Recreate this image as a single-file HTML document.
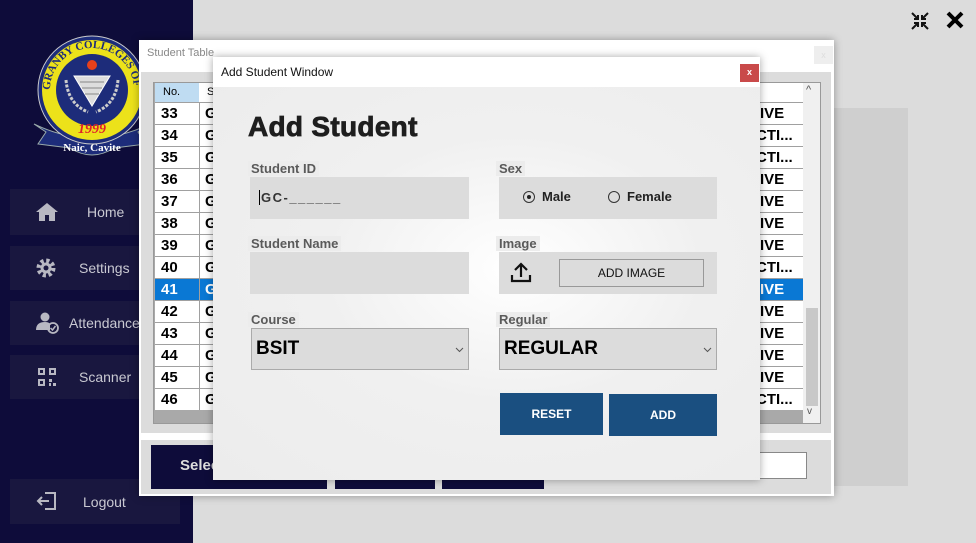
<!DOCTYPE html>
<html><head><meta charset="utf-8"><style>
*{box-sizing:border-box;margin:0;padding:0}
body{width:976px;height:543px;overflow:hidden;background:#dcdcdc;font-family:"Liberation Sans",sans-serif;position:relative}
.abs{position:absolute}
.side{left:0;top:0;width:193px;height:543px;background:#0e0c3a}
.nav{left:10px;width:170px;background:#19173f;color:#c9c9d2;font-size:14px}
.nav span{position:absolute;top:50%;transform:translateY(-50%)}
.win{background:#fff;box-shadow:0 0 8px rgba(0,0,0,.35)}
.cell{position:absolute;font-weight:bold;font-size:15px;color:#000}
.lbl{font-weight:bold;font-size:13px;color:#5a5a5a;background:#ececec;padding:0 3px}
.fld{background:#dcdcdc}
.btn{background:#1a4f80;color:#fff;font-weight:bold;font-size:12px;display:flex;align-items:center;justify-content:center}
</style></head><body>
<div class="abs side"></div>
<!-- logo -->
<svg class="abs" style="left:30px;top:32px" width="120" height="130" viewBox="0 0 120 130">
<defs><path id="ring" d="M20 58 A42 42 0 1 1 104 58"/></defs>
<path d="M4 92 L16 100 L8 112 L40 116 Q62 130 84 116 L116 112 L108 100 L120 92 Q62 120 4 92Z" fill="#1d2c7a" stroke="#9aa" stroke-width="1"/>
<text x="62" y="119" text-anchor="middle" font-family="Liberation Serif" font-weight="bold" font-size="11" fill="#fff">Naic, Cavite</text>
<circle cx="62" cy="58" r="54" fill="#1d2c7a" stroke="#ccc" stroke-width="1"/>
<circle cx="62" cy="58" r="50" fill="#ece21a"/>
<text font-family="Liberation Serif" font-weight="bold" font-size="11" fill="#1d2c7a"><textPath href="#ring">GRANBY COLLEGES OF SCIENCE AND TECHNOLOGY</textPath></text>
<circle cx="62" cy="58" r="36" fill="#1d2c7a"/>
<path d="M44 44 L80 44 L62 74Z" fill="#ddd" stroke="#fff"/>
<path d="M50 50 L74 50 M52 56 L72 56 M55 62 L69 62" stroke="#888" stroke-width="1"/>
<circle cx="62" cy="33" r="5" fill="#e8401a"/>
<path d="M36 48 Q38 72 58 80 M88 48 Q86 72 66 80" stroke="#ccc" stroke-width="3" fill="none" stroke-dasharray="3 1.5"/>
<text x="62" y="101" text-anchor="middle" font-family="Liberation Serif" font-weight="bold" font-style="italic" font-size="14" fill="#e0202a">1999</text>
</svg>
<div class="abs nav" style="top:189px;height:46px"><svg class="abs" style="left:26px;top:14px" width="22" height="18" viewBox="0 0 22 18"><path d="M11 0 L22 9 H19 V18 H13 V12 H9 V18 H3 V9 H0Z" fill="#b8b8c2"/></svg><span style="left:77px">Home</span></div>
<div class="abs nav" style="top:246px;height:44px"><svg class="abs" style="left:26px;top:12px" width="20" height="20" viewBox="0 0 20 20"><circle cx="10" cy="10" r="7" fill="none" stroke="#b8b8c2" stroke-width="5" stroke-dasharray="3 2.5"/><circle cx="10" cy="10" r="5.5" fill="#b8b8c2"/><circle cx="10" cy="10" r="2.5" fill="#19173f"/></svg><span style="left:69px">Settings</span></div>
<div class="abs nav" style="top:301px;height:44px"><svg class="abs" style="left:26px;top:11px" width="24" height="22" viewBox="0 0 24 22"><circle cx="9" cy="5" r="4.5" fill="#b8b8c2"/><path d="M0 18 Q0 10 9 10 Q13 10 14 12 L14 18Z" fill="#b8b8c2"/><circle cx="17" cy="16" r="5" fill="none" stroke="#b8b8c2" stroke-width="1.8"/><path d="M14.5 16 L16.5 18 L19.5 14" stroke="#b8b8c2" stroke-width="1.5" fill="none"/></svg><span style="left:59px">Attendance</span></div>
<div class="abs nav" style="top:355px;height:44px"><svg class="abs" style="left:28px;top:13px" width="18" height="18" viewBox="0 0 18 18"><g fill="#b8b8c2"><rect x="0" y="0" width="7" height="7"/><rect x="11" y="0" width="7" height="7"/><rect x="0" y="11" width="7" height="7"/><rect x="11" y="11" width="3" height="3"/><rect x="15" y="15" width="3" height="3"/><rect x="11" y="15" width="2" height="3"/></g><g fill="#19173f"><rect x="2" y="2" width="3" height="3"/><rect x="13" y="2" width="3" height="3"/><rect x="2" y="13" width="3" height="3"/></g></svg><span style="left:69px">Scanner</span></div>
<div class="abs nav" style="top:479px;height:45px"><svg class="abs" style="left:26px;top:12px" width="22" height="20" viewBox="0 0 22 20"><path d="M9 2 H19 V18 H9" stroke="#b8b8c2" stroke-width="2" fill="none"/><path d="M13 10 H2 M6 6 L2 10 L6 14" stroke="#b8b8c2" stroke-width="2" fill="none"/></svg><span style="left:73px">Logout</span></div>

<!-- top right -->
<svg class="abs" style="left:911px;top:12px" width="18" height="18" viewBox="0 0 18 18"><g stroke="#111" stroke-width="2" fill="none"><path d="M1 1 L7 7 M3 7 H7 V3 M17 1 L11 7 M15 7 H11 V3 M1 17 L7 11 M3 11 H7 V15 M17 17 L11 11 M15 11 H11 V15"/></g></svg>
<svg class="abs" style="left:946px;top:11px" width="18" height="18" viewBox="0 0 18 18"><path d="M2 2 L16 16 M16 2 L2 16" stroke="#000" stroke-width="4"/></svg>
<div class="abs" style="left:833px;top:108px;width:75px;height:378px;background:#cfcfcf"></div>

<!-- student table window -->
<div class="abs win" style="left:139px;top:40px;width:695px;height:456px">
 <div class="abs" style="left:8px;top:7px;font-size:11px;color:#888">Student Table</div>
 <div class="abs" style="left:675px;top:6px;width:19px;height:18px;background:#eee;color:#ddd;font-size:9px;text-align:center;line-height:18px">x</div>
 <div class="abs" style="left:2px;top:32px;width:690px;height:361px;background:#dcdcdc"></div>
 <div class="abs" style="left:14px;top:42px;width:668px;height:342px;background:#a9a9a9;border:1px solid #999"></div>
 <div class="abs" style="left:2px;top:400px;width:690px;height:54px;background:#dcdcdc"></div>
 <div class="abs" style="left:12px;top:405px;width:176px;height:44px;background:#0e0c3a;color:#ddd;font-weight:bold;font-size:15px;padding:12px 0 0 29px">Select</div>
 <div class="abs" style="left:196px;top:412px;width:100px;height:37px;background:#0e0c3a"></div>
 <div class="abs" style="left:303px;top:412px;width:102px;height:37px;background:#0e0c3a"></div>
 <div class="abs" style="left:561px;top:412px;width:107px;height:27px;background:#fff;border:1px solid #888"></div>
</div>
<!-- grid -->
<div class="abs" style="left:155px;top:83px;width:648px;height:327px;background:#fff"></div>
<div class="abs" style="left:155px;top:83px;width:44px;height:19px;background:#bfdcf2;font-size:11px;padding:3px 0 0 8px">No.</div>
<div class="abs" style="left:201px;top:83px;font-size:11px;padding:3px 0 0 6px">S</div>
<div class="abs" style="left:803px;top:83px;width:17px;height:340px;background:#f0f0f0"></div>
<div class="abs" style="left:806px;top:308px;width:12px;height:98px;background:#c8c8c8"></div>
<div class="abs" style="left:806px;top:84px;font-size:11px;color:#555">^</div>
<div class="abs" style="left:807px;top:406px;font-size:10px;color:#555">v</div>
<div id="rows"></div>
<script>
var st=["IVE","CTI...","CTI...","IVE","IVE","IVE","IVE","CTI...","IVE","IVE","IVE","IVE","IVE","CTI..."];
var h="";for(var i=0;i<14;i++){var y=102+i*22,sel=i==8,c=sel?"#fff":"#000",bg=sel?"#0a78d4":"#fff";
h+='<div class="abs" style="left:155px;top:'+y+'px;width:648px;height:22px;background:'+bg+';border-top:1px solid #a0a0a0"></div>';
h+='<div class="abs" style="left:199px;top:'+y+'px;width:1px;height:22px;background:#a0a0a0"></div>';
h+='<div class="cell" style="left:161px;top:'+(y+3)+'px;color:'+c+'">'+(33+i)+'</div>';
h+='<div class="cell" style="left:205px;top:'+(y+3)+'px;color:'+c+'">G</div>';
var t=st[i]=="IVE"?"IVE":"CTI...";var x=st[i]=="IVE"?760:756;
h+='<div class="cell" style="left:'+x+'px;top:'+(y+3)+'px;color:'+c+'">'+t+'</div>';}
document.getElementById("rows").innerHTML=h;
</script>

<!-- add student window -->
<div class="abs win" style="left:213px;top:57px;width:547px;height:423px;background:radial-gradient(ellipse at 55% 50%,#ffffff 0%,#f0f0f0 45%,#ececec 100%)">
 <div class="abs" style="left:0;top:0;width:547px;height:30px;background:#fff"></div>
 <div class="abs" style="left:8px;top:8px;font-size:12px;color:#111">Add Student Window</div>
 <div class="abs" style="left:527px;top:7px;width:19px;height:18px;background:#c94a4a;color:#fff;font-size:9px;font-weight:bold;text-align:center;line-height:17px">x</div>
 <div class="abs" style="left:35px;top:54px;font-size:28px;font-weight:bold;color:#1e1e1e;letter-spacing:0.3px;-webkit-text-stroke:0.8px #1e1e1e">Add Student</div>

 <div class="abs lbl" style="left:35px;top:104px">Student ID</div>
 <div class="abs fld" style="left:37px;top:120px;width:219px;height:42px"><div class="abs" style="left:9px;top:13px;font-weight:bold;font-size:13px;color:#333;letter-spacing:1.5px;border-left:1px solid #000;padding-left:1px">GC-______</div></div>
 <div class="abs lbl" style="left:283px;top:104px">Sex</div>
 <div class="abs fld" style="left:286px;top:120px;width:218px;height:42px;font-weight:bold;font-size:13px;color:#222">
  <div class="abs" style="left:24px;top:14px;width:12px;height:12px;border:1px solid #333;border-radius:50%"><div style="width:4px;height:4px;background:#222;border-radius:50%;margin:3px"></div></div>
  <div class="abs" style="left:43px;top:12px">Male</div>
  <div class="abs" style="left:109px;top:14px;width:12px;height:12px;border:1px solid #333;border-radius:50%"></div>
  <div class="abs" style="left:128px;top:12px">Female</div>
 </div>
 <div class="abs lbl" style="left:35px;top:179px">Student Name</div>
 <div class="abs fld" style="left:37px;top:195px;width:219px;height:42px"></div>
 <div class="abs lbl" style="left:283px;top:179px">Image</div>
 <div class="abs fld" style="left:286px;top:195px;width:218px;height:42px">
  <svg class="abs" style="left:11px;top:9px" width="22" height="22" viewBox="0 0 22 22"><path d="M11 16 V3 M5 9 L11 3 L17 9 M2 14 V20 H20 V14" stroke="#111" stroke-width="2.2" fill="none"/></svg>
  <div class="abs" style="left:60px;top:7px;width:145px;height:28px;border:1px solid #999;font-size:12px;color:#111;text-align:center;line-height:26px">ADD IMAGE</div>
 </div>
 <div class="abs lbl" style="left:35px;top:255px">Course</div>
 <div class="abs fld" style="left:38px;top:271px;width:218px;height:42px;border:1px solid #aaa"><div class="abs" style="left:4px;top:9px;font-weight:bold;font-size:19px">BSIT</div><svg class="abs" style="right:4px;top:18px" width="9" height="6" viewBox="0 0 9 6"><path d="M1 1 L4.5 4.5 L8 1" stroke="#555" fill="none"/></svg></div>
 <div class="abs lbl" style="left:283px;top:255px">Regular</div>
 <div class="abs fld" style="left:286px;top:271px;width:218px;height:42px;border:1px solid #aaa"><div class="abs" style="left:4px;top:9px;font-weight:bold;font-size:19px">REGULAR</div><svg class="abs" style="right:4px;top:18px" width="9" height="6" viewBox="0 0 9 6"><path d="M1 1 L4.5 4.5 L8 1" stroke="#555" fill="none"/></svg></div>
 <div class="abs btn" style="left:287px;top:336px;width:103px;height:42px">RESET</div>
 <div class="abs btn" style="left:396px;top:337px;width:108px;height:42px">ADD</div>
</div>
</body></html>
